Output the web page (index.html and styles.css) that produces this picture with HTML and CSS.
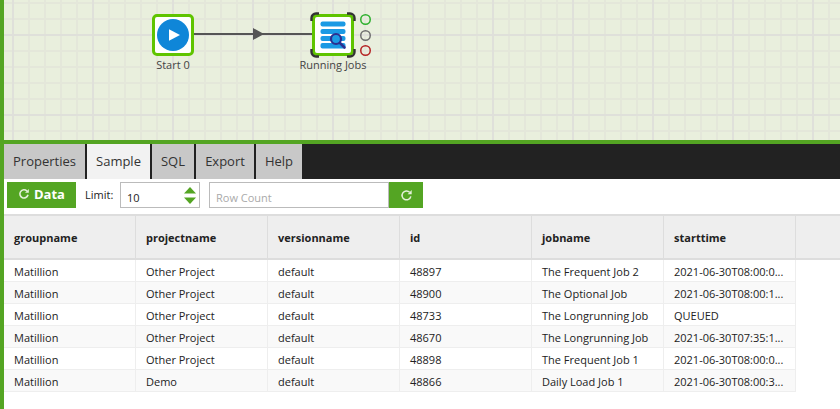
FILE: index.html
```html
<!DOCTYPE html>
<html lang="en">
<head>
<meta charset="utf-8">
<title>Running Jobs</title>
<link rel="stylesheet" href="styles.css">
</head>
<body>
<div class="app">
  <section class="canvas">
    <svg class="link" width="120" height="20" viewBox="0 0 120 20">
      <path d="M0 10H118" stroke="#555" stroke-width="2" fill="none"/>
      <path d="M59 4L70 10L59 16Z" fill="#555"/>
    </svg>
    <div class="node node-start">
      <div class="node-box">
        <svg width="34" height="34" viewBox="0 0 34 34">
          <circle cx="17" cy="17" r="16" fill="#0f86d8"/>
          <path d="M13 11.300L24 17L13 22.700Z" fill="#fff"/>
        </svg>
      </div>
      <div class="node-label">Start 0</div>
    </div>
    <div class="node node-jobs">
      <svg class="corners" width="46" height="46" viewBox="0 0 46 46">
        <path d="M1.500 9V6A4.500 4.500 0 0 1 6 1.500H9M37 1.500H40A4.500 4.500 0 0 1 44.500 6V9M44.500 37V40A4.500 4.500 0 0 1 40 44.500H37M9 44.500H6A4.500 4.500 0 0 1 1.500 40V37" fill="none" stroke="#333" stroke-width="2.400"/>
      </svg>
      <div class="node-box">
        <svg width="34" height="34" viewBox="0 0 34 34">
          <rect x="4.500" y="3.500" width="25" height="5" rx="2" fill="#1b9ae4"/>
          <rect x="4.500" y="11" width="25" height="5" rx="2" fill="#1b9ae4"/>
          <rect x="4.500" y="18" width="25" height="5" rx="2" fill="#1b9ae4"/>
          <rect x="4.500" y="25" width="25" height="5.500" rx="2" fill="#1b9ae4"/>
          <circle cx="20" cy="21" r="5" fill="#1b9ae4" stroke="#2c2f8f" stroke-width="2.200"/>
          <path d="M24 25L28.500 29.500" stroke="#2c2f8f" stroke-width="2.600" stroke-linecap="round"/>
        </svg>
      </div>
      <div class="node-label">Running Jobs</div>
      <svg class="port port-ok" width="11" height="11" viewBox="0 0 11 11"><circle cx="5.500" cy="5.500" r="4.750" fill="none" stroke="#2eb02e" stroke-width="1.500"/></svg>
      <svg class="port port-any" width="11" height="11" viewBox="0 0 11 11"><circle cx="5.500" cy="5.500" r="4.750" fill="none" stroke="#6f6f6f" stroke-width="1.500"/></svg>
      <svg class="port port-fail" width="11" height="11" viewBox="0 0 11 11"><circle cx="5.500" cy="5.500" r="4.750" fill="none" stroke="#b52323" stroke-width="1.500"/></svg>
    </div>
  </section>

  <nav class="tabs">
    <a class="tab tab-properties">Properties</a>
    <a class="tab tab-sample is-active">Sample</a>
    <a class="tab tab-sql">SQL</a>
    <a class="tab tab-export">Export</a>
    <a class="tab tab-help">Help</a>
  </nav>

  <div class="toolbar">
    <button class="btn btn-data">
      <svg class="refresh" width="12" height="12" viewBox="0 0 12 12"><path d="M10 6.800A4.100 4.100 0 1 1 8.900 3" fill="none" stroke="currentColor" stroke-width="1.600"/><path d="M10.800 1V4.800H7Z" fill="currentColor"/></svg>
      <span>Data</span>
    </button>
    <label class="limit-label">Limit:</label>
    <div class="limit-input">
      <span>10</span>
      <span class="spin">
        <svg width="12" height="17" viewBox="0 0 12 17"><path d="M6 0L12 6.500H0Z" fill="#54a523"/><path d="M0 10.500H12L6 17Z" fill="#54a523"/></svg>
      </span>
    </div>
    <div class="count-group">
      <div class="count-input">Row Count</div>
      <button class="btn btn-count">
        <svg class="refresh" width="13" height="13" viewBox="0 0 12 12"><path d="M10 6.800A4.100 4.100 0 1 1 8.900 3" fill="none" stroke="currentColor" stroke-width="1.400"/><path d="M10.800 1V4.800H7Z" fill="currentColor"/></svg>
      </button>
    </div>
  </div>

  <table class="grid">
    <thead>
      <tr><th>groupname</th><th>projectname</th><th>versionname</th><th>id</th><th>jobname</th><th>starttime</th><th class="filler"></th></tr>
    </thead>
    <tbody>
      <tr><td>Matillion</td><td>Other Project</td><td>default</td><td>48897</td><td>The Frequent Job 2</td><td>2021-06-30T08:00:0...</td></tr>
      <tr><td>Matillion</td><td>Other Project</td><td>default</td><td>48900</td><td>The Optional Job</td><td>2021-06-30T08:00:1...</td></tr>
      <tr><td>Matillion</td><td>Other Project</td><td>default</td><td>48733</td><td>The Longrunning Job</td><td>QUEUED</td></tr>
      <tr><td>Matillion</td><td>Other Project</td><td>default</td><td>48670</td><td>The Longrunning Job</td><td>2021-06-30T07:35:1...</td></tr>
      <tr><td>Matillion</td><td>Other Project</td><td>default</td><td>48898</td><td>The Frequent Job 1</td><td>2021-06-30T08:00:0...</td></tr>
      <tr><td>Matillion</td><td>Demo</td><td>default</td><td>48866</td><td>Daily Load Job 1</td><td>2021-06-30T08:00:3...</td></tr>
    </tbody>
  </table>
</div>
</body>
</html>
```
FILE: styles.css
```css
* { box-sizing: border-box; }
html, body { margin: 0; height: 100%; overflow: hidden; }
body { font-family: "Open Sans", sans-serif; font-size: 11px; color: #222; background: #fff; }
.app { border-left: 4px solid #54a523; height: 409px; }

.canvas {
  position: relative;
  height: 144px;
  border-bottom: 4px solid #54a523;
  background-color: #e9efdd;
  background-image:
    linear-gradient(90deg, #dfe0da 2px, transparent 2px),
    linear-gradient(#dfe0da 2px, transparent 2px),
    linear-gradient(90deg, #e4e7da 2px, transparent 2px),
    linear-gradient(#e4e7da 2px, transparent 2px);
  background-size: 80px 80px, 80px 80px, 16px 16px, 16px 16px;
  background-position: 88px 0, 0 34px, 8px 0, 0 2px;
}
.link { position: absolute; left: 190px; top: 24px; }
.node { position: absolute; width: 42px; height: 42px; }
.node-start { left: 148px; top: 14px; }
.node-jobs { left: 308px; top: 14px; }
.node-box {
  width: 42px; height: 42px;
  background: #fff;
  border: 3px solid #5fc400;
  border-radius: 5px;
  display: flex; align-items: center; justify-content: center;
}
.node-label {
  position: absolute; top: 43px; left: -30px; width: 102px;
  text-align: center; font-size: 11px; line-height: 15px; color: #444; white-space: nowrap;
}
.corners { position: absolute; left: -2px; top: -2px; }
.port { position: absolute; left: 48px; }
.port-ok { top: 0; }
.port-any { top: 16px; }
.port-fail { top: 31px; }

.tabs { display: flex; height: 35px; background: #222; }
.tab {
  display: flex; align-items: center; justify-content: center;
  background: #c8c8c8; color: #333; font-size: 13px;
  margin-right: 2px; padding-bottom: 2px;
}
.tab-properties { width: 81px; }
.tab-sample { width: 63px; }
.tab-sql { width: 42px; }
.tab-export { width: 58px; }
.tab-help { width: 46px; margin-right: 0; }
.tab.is-active { background: #f2f2f2; }

.toolbar { display: flex; align-items: center; height: 35px; padding: 3px 0 6px 3px; }
.btn { border: 0; padding: 0; background: #54a523; color: #fff; display: flex; align-items: center; justify-content: center; font-family: inherit; height: 26px; }
.btn-data { width: 69px; gap: 4px; font-size: 13px; font-weight: 700; padding-bottom: 2px; }
.refresh { color: #e4f0da; }
.limit-label { margin-left: 9px; width: 35px; font-size: 11px; color: #222; position: relative; top: -1px; }
.limit-input {
  width: 80px; height: 26px; background: #fff; border: 1px solid #bbb;
  display: flex; align-items: center; justify-content: space-between;
  padding: 4px 3px 0 6px; font-size: 11px; color: #222;
}
.spin { display: flex; margin-top: -4px; }
.count-group { display: flex; margin-left: 9px; }
.count-input { width: 180px; height: 26px; background: #fff; border: 1px solid #bbb; padding: 6px 6px 0; color: #aaa; font-size: 11px; line-height: 17px; }
.btn-count { width: 34px; }

.grid { border-collapse: separate; border-spacing: 0; table-layout: fixed; width: 836px; }
.grid th, .grid td { width: 132px; padding: 0 0 0 10px; text-align: left; white-space: nowrap; overflow: hidden; color: #222; font-size: 11px; }
.grid th {
  height: 46px; background: #eee; font-weight: 700;
  border-top: 2px solid #ddd; border-bottom: 2px solid #ddd; border-right: 1px solid #ddd;
}
.grid th.filler { width: 44px; border-right: 0; }
.grid td { height: 22px; border-bottom: 1px solid #eee; border-right: 1px solid #eee; padding-top: 2px; line-height: 15px; }
.grid tbody tr:nth-child(even) td { background: #f9f9f9; }
```
